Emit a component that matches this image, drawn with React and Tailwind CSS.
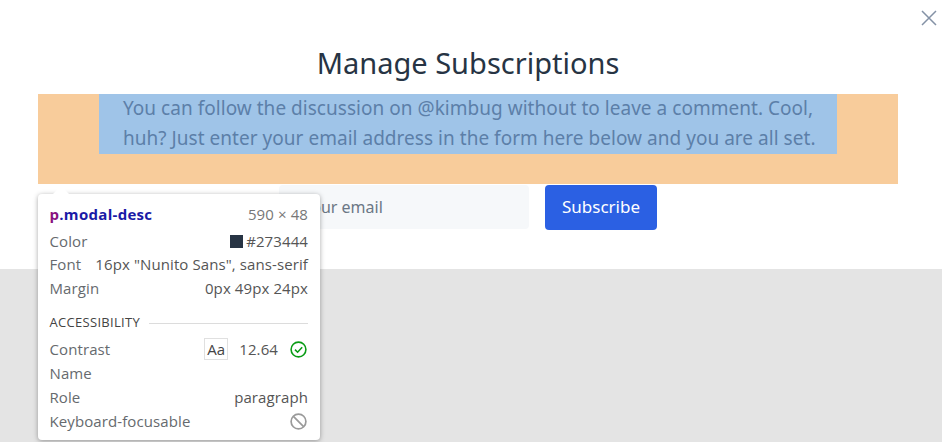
import React from 'react'

function Row({ label, children, className = "h-6" }) {
  return (
    <div className={`flex items-center justify-between ${className}`}>
      <span className="text-[#666a6e]">{label}</span>
      {children}
    </div>
  )
}

function Inspector() {
  return (
    <div className="absolute left-[38px] top-[194px] h-[246px] w-[282px] rounded-[4px] bg-white pl-[11.5px] pr-3 pt-2 font-['Open_Sans',sans-serif] text-[15px] tracking-[0.1px] text-[#555] shadow-[0_1px_5px_rgba(0,0,0,0.35)]">
      <div className="absolute left-[15px] top-[-8px] h-0 w-0 border-x-[8px] border-b-[8px] border-x-transparent border-b-white" />
      <div className="flex h-6 items-center justify-between">
        <span className="font-bold tracking-[0.3px] text-[#1a1aa6]"><span className="text-[#881280]">p</span>.modal-desc</span>
        <span className="text-[#777]">590 × 48</span>
      </div>
      <div className="mt-1 flex flex-col">
        <Row label="Color" className="h-[22px]">
          <span className="flex items-center gap-[3px]">
            <span className="h-[13px] w-[13px] bg-[#273444]" />
            #273444
          </span>
        </Row>
        <Row label="Font"><span>16px "Nunito Sans", sans-serif</span></Row>
        <Row label="Margin"><span>0px 49px 24px</span></Row>
      </div>
      <div className="mt-[11px] flex h-6 items-center gap-[9px]">
        <span className="text-[13px] tracking-[0.3px] text-[#444]">ACCESSIBILITY</span>
        <span className="h-px flex-1 bg-[#dcdcdc]" />
      </div>
      <div className="mt-[2px] flex flex-col">
        <Row label="Contrast">
          <span className="flex items-center">
            <span className="flex h-[22px] w-[24px] items-center justify-center border border-[#e0e0e0] text-[#444]">Aa</span>
            <span className="ml-[11px]">12.64</span>
            <svg className="ml-[12px] mr-[1px]" width="17" height="17" viewBox="0 0 17 17" fill="none" stroke="#0a9c16" strokeWidth="1.6">
              <circle cx="8.5" cy="8.5" r="7.4" />
              <path d="M5 8.6l2.6 2.6 4.6-5" />
            </svg>
          </span>
        </Row>
        <Row label="Name" />
        <Row label="Role"><span>paragraph</span></Row>
        <Row label="Keyboard-focusable">
          <svg className="mr-[1px]" width="17" height="17" viewBox="0 0 17 17" fill="none" stroke="#9a9a9a" strokeWidth="1.7">
            <circle cx="8.5" cy="8.5" r="7.4" />
            <path d="M3.4 3.4l10.2 10.2" />
          </svg>
        </Row>
      </div>
    </div>
  )
}

export default function App() {
  return (
    <div className="relative h-[442px] w-[942px] overflow-hidden bg-[#e4e4e4] font-['Noto_Sans',sans-serif]">
      <section className="relative flex h-[269px] flex-col items-center bg-white pr-[6px]">
        <button className="absolute right-[5px] top-[10px] text-[#8492a6]" aria-label="Close">
          <svg width="16" height="16" viewBox="0 0 16 16" fill="none" stroke="currentColor" strokeWidth="1.5">
            <path d="M1 1l14 14M15 1L1 15" />
          </svg>
        </button>
        <h2 className="mt-[43px] h-[51px] text-[29px] leading-[39px] text-[#273444]">Manage Subscriptions</h2>
        <div className="flex h-[90px] w-[860px] justify-center bg-[#f8cc9b]">
          <p className="h-[60px] w-[738px] bg-[#9fc4e8] pl-6 pr-4 text-[19px] leading-[30px] tracking-[0.03px] text-[#5c7fa8]">
            <span className="-mt-px block">You can follow the discussion on @kimbug without to leave a comment. Cool, huh? Just enter your email address in the form here below and you are all set.</span>
          </p>
        </div>
        <form className="mt-px flex gap-4">
          <input className="h-11 w-[250px] rounded-[4px] bg-[#f6f8fa] pl-6 text-[16px] placeholder:text-[#6b7785]" placeholder="Your email" readOnly />
          <button type="button" className="h-[45px] w-[112px] rounded-[4px] bg-[#2b60e3] pb-[2px] text-[17px] text-white">Subscribe</button>
        </form>
      </section>
      <Inspector />
    </div>
  )
}
